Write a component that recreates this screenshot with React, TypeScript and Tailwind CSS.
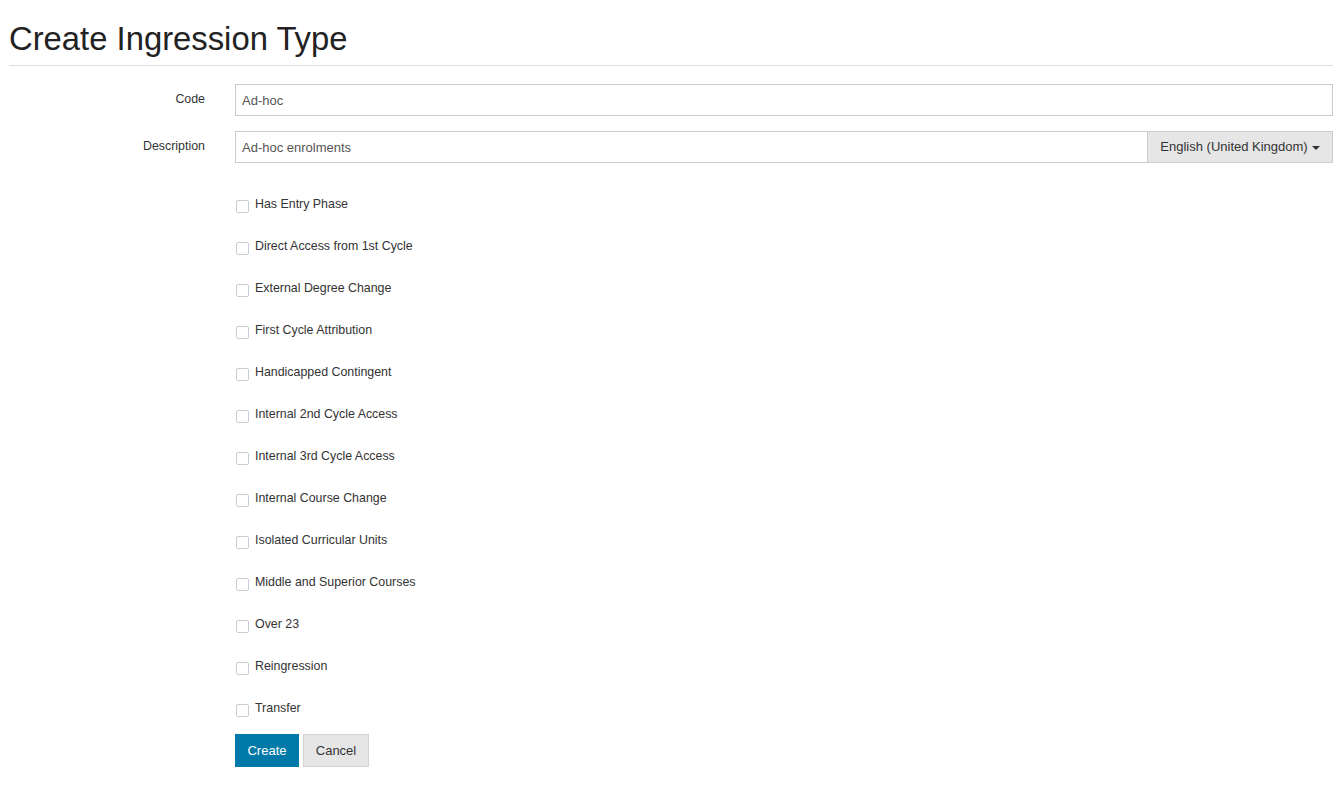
const options = [
  "Has Entry Phase",
  "Direct Access from 1st Cycle",
  "External Degree Change",
  "First Cycle Attribution",
  "Handicapped Contingent",
  "Internal 2nd Cycle Access",
  "Internal 3rd Cycle Access",
  "Internal Course Change",
  "Isolated Curricular Units",
  "Middle and Superior Courses",
  "Over 23",
  "Reingression",
  "Transfer",
];

export default function App() {
  return (
    <div className="min-h-screen bg-white px-[9px] font-['Liberation_Sans',Arial,sans-serif] text-[#333]">
      <h1 className="pt-[21px] text-[32.8px] leading-[36px] text-[#222]">Create Ingression Type</h1>
      <hr className="mt-[8px] border-t border-[#ddd]" />

      <div className="mt-[18px] flex items-center">
        <label className="-mt-[1px] w-[196px] text-right text-[12.4px]">Code</label>
        <div className="ml-[30px] flex-1">
          <input
            defaultValue="Ad-hoc"
            className="h-[32px] w-full border border-[#ccc] px-[6px] text-[13px] text-[#555] outline-none"
          />
        </div>
      </div>

      <div className="mt-[15px] flex items-center">
        <label className="-mt-[1px] w-[196px] text-right text-[12.4px]">Description</label>
        <div className="ml-[30px] flex flex-1">
          <input
            defaultValue="Ad-hoc enrolments"
            className="h-[32px] flex-1 border border-[#ccc] px-[6px] text-[13px] text-[#555] outline-none"
          />
          <button className="flex h-[32px] w-[185px] items-center justify-center gap-[4px] border border-l-0 border-[#ccc] bg-[#e6e6e6] text-[13px] text-[#333]">
            English (United Kingdom)
            <span className="mt-[1px] inline-block h-0 w-0 border-x-[4px] border-t-[4px] border-x-transparent border-t-[#333]" />
          </button>
        </div>
      </div>

      <div className="ml-[226px] mt-[20px] flex flex-col">
        {options.map((o) => (
          <label key={o} className="flex h-[42px] items-center gap-[6px] text-[12.4px]">
            <span className="mt-[5px] ml-[1px] h-[13px] w-[13px] rounded-[2px] border border-[#c8ccd4] bg-white" />
            <span>{o}</span>
          </label>
        ))}
      </div>

      <div className="ml-[226px] mt-[5px] flex gap-[4px]">
        <button className="h-[33px] w-[64px] bg-[#0079a8] text-[13px] text-white">Create</button>
        <button className="h-[33px] w-[66px] border border-[#d4d4d4] bg-[#e6e6e6] text-[13px] text-[#333]">Cancel</button>
      </div>
    </div>
  );
}
